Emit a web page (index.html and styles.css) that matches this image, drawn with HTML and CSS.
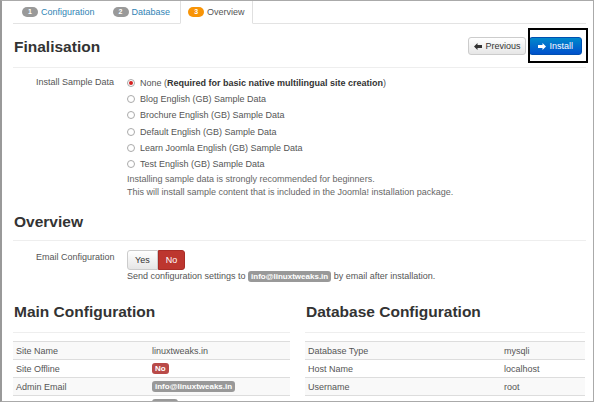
FILE: index.html
```html
<!DOCTYPE html>
<html lang="en">
<head>
    <meta charset="UTF-8">
    <title>Joomla Installation - Overview</title>
    <link rel="stylesheet" href="styles.css">
</head>
<body>
<div class="frame">
    <ul class="tabs">
        <li><span class="num">1</span>Configuration</li>
        <li><span class="num">2</span>Database</li>
        <li class="active"><span class="num num-warn">3</span>Overview</li>
    </ul>

    <div class="content">
        <div class="page-header">
            <h2>Finalisation</h2>
            <div class="btn-group">
                <button class="btn">
                    <svg width="8" height="7" viewBox="0 0 8 7"><polygon points="0,3.5 3.5,0 3.5,2 8,2 8,5 3.5,5 3.5,7" fill="#333"/></svg>
                    Previous
                </button>
                <button class="btn btn-primary">
                    <svg width="8" height="7" viewBox="0 0 8 7"><polygon points="8,3.5 4.5,0 4.5,2 0,2 0,5 4.5,5 4.5,7" fill="#fff"/></svg>
                    Install
                </button>
                <span class="highlight"></span>
            </div>
        </div>

        <div class="row sample-row">
            <div class="label">Install Sample Data</div>
            <div class="controls">
                <div class="radio checked"><span class="dot"></span>None (<b>Required for basic native multilingual site creation</b>)</div>
                <div class="radio"><span class="dot"></span>Blog English (GB) Sample Data</div>
                <div class="radio"><span class="dot"></span>Brochure English (GB) Sample Data</div>
                <div class="radio"><span class="dot"></span>Default English (GB) Sample Data</div>
                <div class="radio"><span class="dot"></span>Learn Joomla English (GB) Sample Data</div>
                <div class="radio"><span class="dot"></span>Test English (GB) Sample Data</div>
                <p class="help">Installing sample data is strongly recommended for beginners.<br>This will install sample content that is included in the Joomla! installation package.</p>
            </div>
        </div>

        <h2 class="section">Overview</h2>

        <div class="row email-row">
            <div class="label">Email Configuration</div>
            <div class="controls">
                <div class="toggle">
                    <span class="yes">Yes</span><span class="no">No</span>
                </div>
                <p class="send">Send configuration settings to <span class="badge">info@linuxtweaks.in</span> by email after installation.</p>
            </div>
        </div>

        <div class="cols">
            <div class="col">
                <h2 class="section">Main Configuration</h2>
                <table class="main-table">
                    <tr><td>Site Name</td><td>linuxtweaks.in</td></tr>
                    <tr><td>Site Offline</td><td><span class="badge badge-red">No</span></td></tr>
                    <tr><td>Admin Email</td><td><span class="badge">info@linuxtweaks.in</span></td></tr>
                    <tr><td></td><td><span class="badge badge-empty"></span></td></tr>
                </table>
            </div>
            <div class="col">
                <h2 class="section">Database Configuration</h2>
                <table class="db-table">
                    <tr><td>Database Type</td><td>mysqli</td></tr>
                    <tr><td>Host Name</td><td>localhost</td></tr>
                    <tr><td>Username</td><td>root</td></tr>
                    <tr><td></td><td></td></tr>
                </table>
            </div>
        </div>
    </div>
</div>
</body>
</html>
```

FILE: styles.css
```css
*{
    margin: 0px;
    padding: 0px;
    box-sizing: border-box;
}

body{
    font-family: 'Liberation Sans', Arial, sans-serif;
    font-size: 9px;
    color: #555;
    background-color: white;
}

.frame {
    width: 594px;
    height: 402px;
    border: 1px solid #aaa;
    border-left: 2px solid #999;
    overflow: hidden;
    background: white;
}

/* step tabs */
.tabs {
    list-style: none;
    display: flex;
    height: 23px;
    margin: 0 7px 0 11px;
    padding-left: 1px;
    border-bottom: 1px solid #e3e3e3;
}

.tabs li {
    display: flex;
    align-items: center;
    padding: 0 8px;
    margin-right: 2px;
    color: #3184b5;
    line-height: 22px;
}

.tabs li.active {
    color: #555;
    background: white;
    border: 1px solid #e0e0e0;
    border-top: none;
    border-bottom-color: white;
    height: 23px;
    padding: 0 7px;
}

.num {
    display: inline-block;
    width: 16px;
    height: 10px;
    line-height: 10px;
    border-radius: 5px;
    background: #999;
    color: white;
    font-size: 7px;
    font-weight: bold;
    text-align: center;
    margin-right: 3px;
}

.num-warn {
    background: #f89406;
}

.content {
    padding: 0 7px 0 11px;
}

.page-header {
    display: flex;
    justify-content: space-between;
    align-items: center;
    padding: 11px 4px 10px 1px;
    border-bottom: 1px solid #eee;
}

h2 {
    font-size: 15.5px;
    font-weight: bold;
    color: #333;
    line-height: 20px;
}

.page-header h2 {
    margin-top: 2px;
}

.btn-group {
    position: relative;
    display: flex;
    gap: 3px;
}

.btn {
    font-family: 'Liberation Sans', Arial, sans-serif;
    font-size: 9px;
    height: 18px;
    padding: 0 5px;
    color: #333;
    border: 1px solid #ccc;
    border-radius: 3px;
    background: linear-gradient(#fff, #e6e6e6);
    display: flex;
    align-items: center;
    gap: 3px;
}

.btn-primary {
    color: white;
    border-color: #0050b0;
    background: linear-gradient(#0088cc, #0050cc);
    padding: 0 8px;
}

/* annotation box round the install button */
.highlight {
    position: absolute;
    right: -6px;
    top: -9px;
    width: 60px;
    height: 35px;
    border: 2px solid black;
}

.row {
    display: flex;
    padding-left: 23px;
}

.label {
    width: 91px;
    color: #555;
}

.sample-row {
    margin-top: 7px;
}

.sample-row .label {
    padding-top: 2px;
}

.radio {
    display: flex;
    align-items: center;
    height: 16.2px;
    color: #555;
}

.radio b {
    color: #333;
}

.dot {
    width: 8px;
    height: 8px;
    border: 1px solid #aaa;
    border-radius: 50%;
    margin-right: 5px;
    background: white;
    display: flex;
    align-items: center;
    justify-content: center;
}

.checked .dot::after {
    content: '';
    width: 4px;
    height: 4px;
    border-radius: 50%;
    background: #d32020;
}

.help {
    line-height: 13px;
    color: #666;
    margin-top: 1px;
}

.section {
    margin-top: 13px;
    padding: 0 0 8px 1px;
    border-bottom: 1px solid #eee;
}

.email-row {
    margin-top: 9px;
}

.email-row .label {
    padding-top: 2px;
}

.toggle {
    display: flex;
    height: 20px;
}

.toggle span {
    display: flex;
    align-items: center;
    padding: 0 7px;
    border: 1px solid #ccc;
}

.yes {
    background: linear-gradient(#fff, #e6e6e6);
    color: #333;
    border-radius: 3px 0 0 3px;
}

.no {
    background: #bd362f;
    border-color: #a82c26 !important;
    color: white;
    border-radius: 0 3px 3px 0;
}

.send {
    line-height: 12px;
    margin-top: 0px;
}

.badge {
    display: inline-block;
    background: #999;
    color: white;
    font-size: 8px;
    font-weight: bold;
    line-height: 11px;
    padding: 0 3px;
    border-radius: 3px;
}

.badge-red {
    background: #b94a48;
}

.badge-empty {
    width: 26px;
    height: 11px;
    vertical-align: middle;
}

.cols {
    display: grid;
    grid-template-columns: 277px 280px;
    gap: 15px;
}

.cols .section {
    margin-top: 20px;
    padding-bottom: 10px;
}

table {
    width: 100%;
    border-collapse: collapse;
    margin-top: 8px;
}

td {
    height: 18px;
    padding: 0 3px;
    border-top: 1px solid #ddd;
    color: #555;
}

tr:nth-child(odd) td {
    background: #f9f9f9;
}

.main-table td:first-child {
    width: 136px;
}

.db-table td:first-child {
    width: 196px;
}
```
